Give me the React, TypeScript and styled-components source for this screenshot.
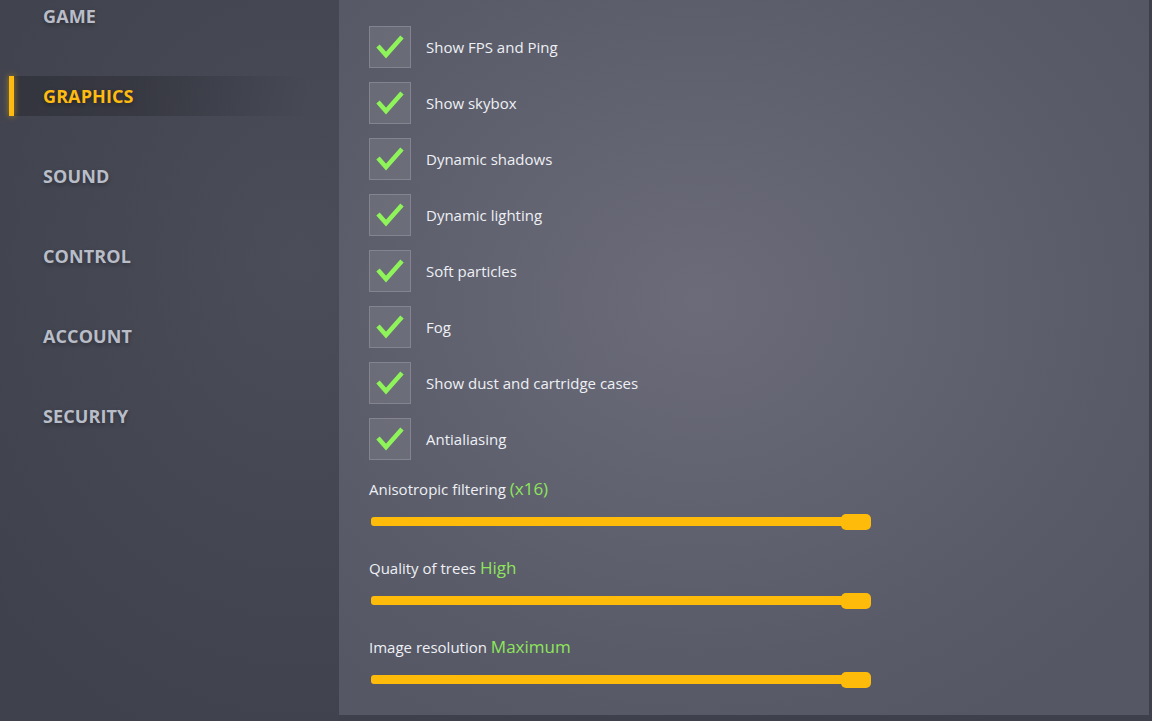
import React from "react";
import styled, { createGlobalStyle } from "styled-components";

const Global = createGlobalStyle`
  html, body { margin: 0; padding: 0; background: #3d3f4a; }
  body { font-family: "Open Sans", "Noto Sans", sans-serif; }
  * { box-sizing: border-box; }
`;

const Page = styled.div`
  width: 1152px;
  height: 721px;
  display: flex;
  overflow: hidden;
  background: #3e404b;
`;

const Sidebar = styled.nav`
  width: 339px;
  height: 721px;
  flex-shrink: 0;
  background: radial-gradient(ellipse 420px 520px at 300px 260px, #4b4d59 0%, #454753 45%, #3f414c 100%);
`;

const NavList = styled.ul`
  list-style: none;
  margin: -4px 0 0;
  padding: 0;
  display: flex;
  flex-direction: column;
  gap: 40px;
`;

const NavItem = styled.li<{ $active?: boolean }>`
  position: relative;
  height: 40px;
  margin-left: 9px;
  padding-left: 34px;
  display: flex;
  align-items: center;
  font-weight: 700;
  font-size: 18px;
  letter-spacing: 0.1px;
  color: ${(p) => (p.$active ? "#ffbb0f" : "#b9bdc8")};
  text-shadow: 0 2px 4px rgba(0, 0, 0, 0.35);
  background: ${(p) =>
    p.$active
      ? "linear-gradient(90deg, rgba(40,41,48,0.55) 0%, rgba(40,41,48,0.45) 45%, rgba(40,41,48,0) 100%)"
      : "transparent"};
  width: ${(p) => (p.$active ? "300px" : "auto")};
  &::before {
    content: "";
    display: ${(p) => (p.$active ? "block" : "none")};
    position: absolute;
    left: 0;
    top: 0;
    width: 5px;
    height: 40px;
    background: #ffbb0f;
    box-shadow: 0 0 6px rgba(255, 187, 15, 0.55);
  }
`;

const Main = styled.main`
  width: 810px;
  height: 715px;
  flex-shrink: 0;
  padding: 26px 0 0 30px;
  background: radial-gradient(ellipse 560px 480px at 360px 300px, #6b6b79 0%, #626370 40%, #595b68 75%, #555765 100%);
  display: flex;
  flex-direction: column;
`;

const CheckList = styled.div`
  display: flex;
  flex-direction: column;
  gap: 14px;
`;

const CheckRow = styled.label`
  display: flex;
  align-items: center;
  gap: 15px;
  height: 42px;
  color: #eef0f5;
  font-size: 15px;
`;

const Box = styled.span`
  width: 42px;
  height: 42px;
  flex-shrink: 0;
  border: 1px solid #83848f;
  background: rgba(125, 126, 138, 0.45);
  display: flex;
  align-items: center;
  justify-content: center;
`;

const SliderGroup = styled.div`
  display: flex;
  flex-direction: column;
  margin-top: 18px;
`;

const SliderBlock = styled.div`
  display: flex;
  flex-direction: column;
  height: 79px;
`;

const SliderLabel = styled.div`
  font-size: 15px;
  color: #eef0f5;
  height: 22px;
  line-height: 22px;
`;

const Value = styled.span`
  color: #8ee65c;
  font-size: 17px;
`;

const Track = styled.div`
  position: relative;
  margin-top: 17px;
  margin-left: 2px;
  width: 499px;
  height: 9px;
  border-radius: 3px 0 0 3px;
  background: #ffbb0a;
`;

const Thumb = styled.div`
  position: absolute;
  right: -1px;
  top: -3px;
  width: 30px;
  height: 16px;
  border-radius: 5px;
  background: #ffbb0a;
`;

const Check = () => (
  <svg width="40" height="40" viewBox="0 0 40 40">
    <polyline
      points="8,19 16,28 32,10"
      fill="none"
      stroke="#8ef45a"
      strokeWidth="4.5"
      strokeLinecap="butt"
      strokeLinejoin="miter"
    />
  </svg>
);

const navItems = ["GAME", "GRAPHICS", "SOUND", "CONTROL", "ACCOUNT", "SECURITY"];
const checks = [
  "Show FPS and Ping",
  "Show skybox",
  "Dynamic shadows",
  "Dynamic lighting",
  "Soft particles",
  "Fog",
  "Show dust and cartridge cases",
  "Antialiasing",
];
const sliders = [
  { label: "Anisotropic filtering", value: "(x16)" },
  { label: "Quality of trees", value: "High" },
  { label: "Image resolution", value: "Maximum" },
];

export default function App() {
  return (
    <>
      <Global />
      <Page>
        <Sidebar>
          <NavList>
            {navItems.map((n) => (
              <NavItem key={n} $active={n === "GRAPHICS"}>
                {n}
              </NavItem>
            ))}
          </NavList>
        </Sidebar>
        <Main>
          <CheckList>
            {checks.map((c) => (
              <CheckRow key={c}>
                <Box>
                  <Check />
                </Box>
                {c}
              </CheckRow>
            ))}
          </CheckList>
          <SliderGroup>
            {sliders.map((s) => (
              <SliderBlock key={s.label}>
                <SliderLabel>
                  {s.label} <Value>{s.value}</Value>
                </SliderLabel>
                <Track>
                  <Thumb />
                </Track>
              </SliderBlock>
            ))}
          </SliderGroup>
        </Main>
      </Page>
    </>
  );
}
